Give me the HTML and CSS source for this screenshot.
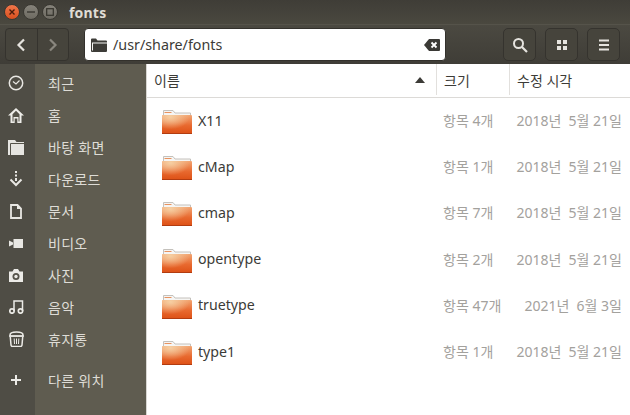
FILE: index.html
```html
<!DOCTYPE html>
<html lang="ko">
<head>
<meta charset="utf-8">
<title>fonts</title>
<link rel="stylesheet" href="styles.css">
</head>
<body>
<svg class="defs" width="0" height="0">
  <defs>
    <linearGradient id="fg" x1="0" y1="0" x2="0" y2="1">
      <stop offset="0" stop-color="#f2a673"/>
      <stop offset="0.55" stop-color="#e8692f"/>
      <stop offset="1" stop-color="#dd5015"/>
    </linearGradient>
    <radialGradient id="fh" cx="0.28" cy="0.1" r="0.65">
      <stop offset="0" stop-color="#f6d2a6" stop-opacity="0.95"/>
      <stop offset="1" stop-color="#f6d2a6" stop-opacity="0"/>
    </radialGradient>
    <symbol id="folder" viewBox="0 0 30 24">
      <path d="M1.500 .5h9.500l2 2.500h15.500v3h-27z" fill="#f6f5f3" stroke="#c4c1bc"/>
      <path d="M2.500 2.500h7" stroke="#e8925f" stroke-width="1"/>
      <rect x="0" y="5" width="30" height="19" rx="1" fill="url(#fg)"/>
      <rect x="0" y="5" width="30" height="19" rx="1" fill="url(#fh)"/>
      <rect x="0" y="23" width="30" height="1" fill="#b23c10"/>
    </symbol>
  </defs>
</svg>
<div class="window">
  <header class="titlebar">
    <div class="controls">
      <span class="ctl close"><svg viewBox="0 0 8 8" width="8" height="8"><path d="M1.500 1.500l5 5M6.500 1.500l-5 5" stroke="#4a1c0c" stroke-width="1.400"/></svg></span>
      <span class="ctl"><svg viewBox="0 0 8 8" width="8" height="8"><path d="M0 4h8" stroke="#35332d" stroke-width="1.300"/></svg></span>
      <span class="ctl"><svg viewBox="0 0 8 8" width="8" height="8"><rect x=".7" y=".7" width="6.600" height="6.600" fill="none" stroke="#35332d" stroke-width="1.200"/></svg></span>
    </div>
    <span class="title">fonts</span>
  </header>
  <div class="toolbar">
    <div class="navgroup">
      <button class="nav nav-back"><svg viewBox="0 0 12 14" width="12" height="14"><path d="M9 1.500L3.500 7 9 12.500" fill="none" stroke="#e6e4df" stroke-width="2.200"/></svg></button>
      <button class="nav nav-fwd"><svg viewBox="0 0 12 14" width="12" height="14"><path d="M3 1.500L8.500 7 3 12.500" fill="none" stroke="#8a877f" stroke-width="2.200"/></svg></button>
    </div>
    <div class="pathbar">
      <svg class="pathicon" viewBox="0 0 16 14" width="16" height="14"><path d="M0 1.500a1 1 0 0 1 1-1h4l1.500 2H15a1 1 0 0 1 1 1V13a1 1 0 0 1-1 1H1a1 1 0 0 1-1-1z" fill="#3d3c38"/><path d="M2 5h14" stroke="#f4f4f2" stroke-width="1"/><path d="M1.500 4.500v8" stroke="#f4f4f2" stroke-width="1"/></svg>
      <span class="pathtext">/usr/share/fonts</span>
      <svg class="pathclear" viewBox="0 0 16 12" width="16" height="12"><path d="M5 0h10a1 1 0 0 1 1 1v10a1 1 0 0 1-1 1H5L0 6z" fill="#3a3935"/><path d="M7.500 3.500l5 5M12.500 3.500l-5 5" stroke="#fff" stroke-width="1.800"/></svg>
    </div>
    <div class="tools">
      <button class="tool"><svg viewBox="0 0 16 16" width="16" height="16"><circle cx="6.500" cy="6.500" r="4.500" fill="none" stroke="#e6e4df" stroke-width="2"/><path d="M10 10l5 5" stroke="#e6e4df" stroke-width="2.200"/></svg></button>
      <button class="tool"><svg viewBox="0 0 12 12" width="12" height="12"><path d="M1 1h4v4H1zM7 1h4v4H7zM1 7h4v4H1zM7 7h4v4H7z" fill="#e6e4df"/></svg></button>
      <button class="tool"><svg viewBox="0 0 12 12" width="12" height="12"><path d="M1 1.500h10M1 6h10M1 10.500h10" stroke="#e6e4df" stroke-width="2"/></svg></button>
    </div>
  </div>
  <div class="body">
    <aside class="sidebar">
      <ul class="places">
        <li class="place"><span class="picon"><svg viewBox="0 0 16 16" width="16" height="16"><circle cx="8" cy="8" r="6.700" fill="none" stroke="#e8e7e3" stroke-width="1.500"/><path d="M5 6.500L8 9l3.500-3.500" fill="none" stroke="#e8e7e3" stroke-width="1.200"/></svg></span><span class="plabel">최근</span></li>
        <li class="place"><span class="picon"><svg viewBox="0 0 16 15" width="16" height="15"><path d="M8 0L0 7.500h2.500V15h4.200v-4.500h2.600V15h4.200V7.500H16z" fill="#eeede9"/><path d="M8 2.800L4.500 6.200v7.300h1V9h5v4.500h1V6.200z" fill="#55534a"/></svg></span><span class="plabel">홈</span></li>
        <li class="place"><span class="picon"><svg viewBox="0 0 16 15" width="16" height="15"><path d="M0 0h7l1.500 2H16v13H0z" fill="#e6e5e1"/><path d="M2.500 3.500H16M2.500 3.500V15" stroke="#55534a" stroke-width="1"/></svg></span><span class="plabel">바탕 화면</span></li>
        <li class="place"><span class="picon"><svg viewBox="0 0 14 16" width="14" height="16"><path d="M7 0v2M7 3.500v2M7 7v3" stroke="#e8e7e3" stroke-width="2"/><path d="M1.500 8.500L7 14l5.500-5.500" fill="none" stroke="#e8e7e3" stroke-width="2"/></svg></span><span class="plabel">다운로드</span></li>
        <li class="place"><span class="picon"><svg viewBox="0 0 12 15" width="12" height="15"><path d="M1 1h6.500L11 4.500V14H1z" fill="none" stroke="#e8e7e3" stroke-width="1.800"/><path d="M7 1v4h4z" fill="#e8e7e3"/></svg></span><span class="plabel">문서</span></li>
        <li class="place"><span class="picon"><svg viewBox="0 0 14 9" width="14" height="9"><path d="M4.500 0H14v9H4.500zM0 1.500L4 3.500v2L0 7.500z" fill="#e8e7e3"/></svg></span><span class="plabel">비디오</span></li>
        <li class="place"><span class="picon"><svg viewBox="0 0 14 13" width="14" height="13"><path d="M0 2.500h3.500L5 0h4l1.500 2.500H14V13H0z" fill="#ecebe7"/><circle cx="7" cy="7.500" r="3.500" fill="#55534a"/><circle cx="7" cy="7.500" r="1.700" fill="#ecebe7"/></svg></span><span class="plabel">사진</span></li>
        <li class="place"><span class="picon"><svg viewBox="0 0 15 14" width="15" height="14"><circle cx="3" cy="11" r="2.200" fill="none" stroke="#ecebe7" stroke-width="1.700"/><circle cx="11.500" cy="11" r="2.200" fill="none" stroke="#ecebe7" stroke-width="1.700"/><path d="M5 11V1h8.500v10" fill="none" stroke="#ecebe7" stroke-width="1.500"/></svg></span><span class="plabel">음악</span></li>
        <li class="place"><span class="picon"><svg viewBox="0 0 15 16" width="15" height="16"><path d="M1 4C1 0 14 0 14 4v1H1z" fill="none" stroke="#ecebe7" stroke-width="1.500"/><path d="M0 4.500h15v1.200H0z" fill="#ecebe7"/><path d="M1.300 6l.7 8a1.500 1.500 0 0 0 1.500 1.500h8A1.500 1.500 0 0 0 13 14l.700-8" fill="none" stroke="#ecebe7" stroke-width="1.500"/><path d="M5.200 7.500l.3 5.500M7.500 7.500V13M9.800 7.500L9.500 13" stroke="#ecebe7" stroke-width="1"/></svg></span><span class="plabel">휴지통</span></li>
        <li class="place place-other"><span class="picon"><svg viewBox="0 0 12 12" width="12" height="12"><path d="M6 1v10M1 6h10" stroke="#ecebe7" stroke-width="2"/></svg></span><span class="plabel">다른 위치</span></li>
      </ul>
    </aside>
    <main class="files">
      <div class="thead">
        <div class="th th-name"><span>이름</span><svg class="sort" viewBox="0 0 10 6" width="10" height="6"><path d="M5 0l5 6H0z" fill="#3c3b37"/></svg></div>
        <div class="th th-size">크기</div>
        <div class="th th-date">수정 시각</div>
      </div>
      <div class="rows">
        <div class="row"><svg class="ficon"><use href="#folder"/></svg><span class="fname">X11</span><span class="fsize">항목 4개</span><span class="fdate">2018년  5월 21일</span></div>
        <div class="row"><svg class="ficon"><use href="#folder"/></svg><span class="fname">cMap</span><span class="fsize">항목 1개</span><span class="fdate">2018년  5월 21일</span></div>
        <div class="row"><svg class="ficon"><use href="#folder"/></svg><span class="fname">cmap</span><span class="fsize">항목 7개</span><span class="fdate">2018년  5월 21일</span></div>
        <div class="row"><svg class="ficon"><use href="#folder"/></svg><span class="fname">opentype</span><span class="fsize">항목 2개</span><span class="fdate">2018년  5월 21일</span></div>
        <div class="row"><svg class="ficon"><use href="#folder"/></svg><span class="fname">truetype</span><span class="fsize">항목 47개</span><span class="fdate">2021년  6월 3일</span></div>
        <div class="row"><svg class="ficon"><use href="#folder"/></svg><span class="fname">type1</span><span class="fsize">항목 1개</span><span class="fdate">2018년  5월 21일</span></div>
      </div>
    </main>
  </div>
</div>
</body>
</html>
```

FILE: styles.css
```css
* { box-sizing: border-box; }
html, body { margin: 0; padding: 0; }
body { width: 630px; height: 415px; overflow: hidden; background: #fff; font-family: "Noto Sans", "Noto Sans CJK KR", sans-serif; }
.defs { position: absolute; }
.window { display: flex; flex-direction: column; width: 630px; height: 415px; }
.titlebar { flex: 0 0 24px; display: flex; align-items: center; background: linear-gradient(#3f3d37, #4a483f); }
.controls { display: flex; gap: 3px; padding-left: 4px; }
.ctl { width: 16px; height: 16px; border-radius: 50%; display: flex; align-items: center; justify-content: center; background: linear-gradient(#85827a, #6e6b62); border: 1px solid #3a3832; }
.ctl.close { background: linear-gradient(#f0764a, #d9501f); }
.title { margin-left: 11px; color: #e0ddd5; font-size: 14px; font-weight: 700; letter-spacing: .2px; }
.toolbar { flex: 0 0 40px; display: flex; align-items: center; background: linear-gradient(#4b4941, #3f3d37); padding: 3px 10px 3px 5px; border-top: 1px solid #55534a; }
button { padding: 0; margin: 0; font: inherit; display: flex; align-items: center; justify-content: center; }
.navgroup { display: flex; width: 64px; height: 33px; border: 1px solid #35332e; border-radius: 4px; background: #46443c; }
.nav { flex: 1; background: transparent; border: 0; }
.nav-back { border-right: 1px solid #35332e; }
.pathbar { margin-left: 15px; width: 362px; height: 33px; display: flex; align-items: center; padding: 0 5px 0 6px; border-radius: 4px; background: #fff; border: 1px solid #33312c; }
.pathicon { flex: none; }
.pathtext { margin-left: 6px; flex: 1; font-size: 14.300px; color: #3c3b37; }
.tools { margin-left: auto; display: flex; gap: 9px; }
.tool { width: 33px; height: 33px; border: 1px solid #35332e; border-radius: 5px; background: #46443c; }
.body { flex: 1; display: flex; min-height: 0; }
.sidebar { width: 147px; flex: none; background: linear-gradient(90deg, #4f4d45 0, #4f4d45 35px, #5f5c50 35px, #5f5c50 146px, #d8d6d2 146px); }
.places { list-style: none; margin: 0; padding: 3px 0 0; }
.place { height: 32px; display: flex; align-items: center; }
.place-other { margin-top: 9px; }
.picon { width: 32px; display: flex; justify-content: center; }
.plabel { margin-left: 16px; color: #dedcd6; font-size: 14px; letter-spacing: .3px; }
.files { flex: 1; min-width: 0; color: #3c3b37; }
.thead { height: 34px; display: flex; border-bottom: 1px solid #dcdad7; font-size: 14px; padding-bottom: 2px; }
.th { display: flex; align-items: center; padding-left: 7px; border-right: 1px solid #e2e0dd; }
.th-name { width: 290px; justify-content: space-between; padding-right: 11px; }
.th-size { width: 73px; }
.th-date { flex: 1; border-right: 0; }
.row { height: 46.200px; display: flex; align-items: center; font-size: 14.200px; }
.ficon { width: 30px; height: 24px; margin: 2px 0 0 15px; flex: none; }
.fname { margin: 0 0 2px 6px; width: 245px; }
.fsize { width: 73px; color: #a3a19d; font-size: 14px; margin-bottom: 2px; }
.fdate { color: #a3a19d; font-size: 14px; white-space: pre; flex: 1; text-align: right; padding-right: 8px; margin-bottom: 2px; }
```
